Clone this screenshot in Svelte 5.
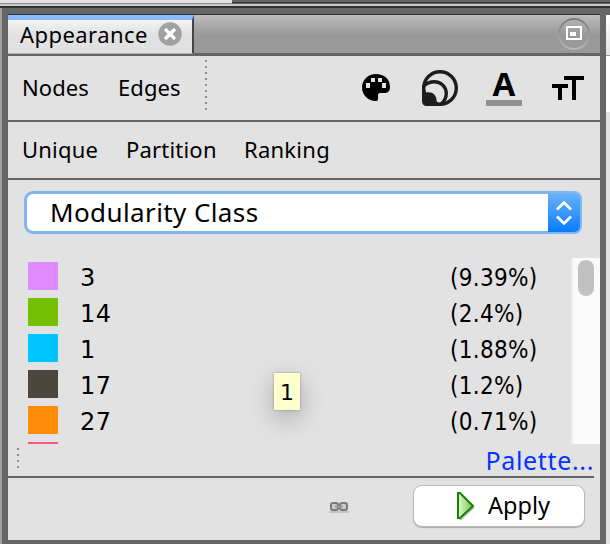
<script>
  const classes = [
    { color: '#df8aff', name: '3', share: '(9.39%)' },
    { color: '#74c000', name: '14', share: '(2.4%)' },
    { color: '#00c4ff', name: '1', share: '(1.88%)' },
    { color: '#4c463e', name: '17', share: '(1.2%)' },
    { color: '#ff8b07', name: '27', share: '(0.71%)' },
    { color: '#ff5584', name: '', share: '' },
  ];
</script>

<main>
  <div class="top"><i></i></div>
  <div class="body">
    <section class="panel">
      <header class="tabs">
        <div class="tab">
          <span class="title">Appearance</span>
          <svg width="24" height="24" viewBox="0 0 24 24"><circle cx="12" cy="12" r="11.7" fill="#a0a0a0" /><path d="M7 7l10 10M17 7l-10 10" stroke="#fff" stroke-width="3.200" /></svg>
        </div>
        <svg class="max" width="32" height="32" viewBox="0 0 32 32">
          <defs><linearGradient id="ring" x2="0" y2="1"><stop offset="0" stop-color="#7c7c7c" /><stop offset=".5" stop-color="#999" /><stop offset="1" stop-color="#b7b7b7" /></linearGradient></defs>
          <circle cx="16" cy="16" r="15" fill="none" stroke="url(#ring)" stroke-width="2" />
          <path d="M9 9h14v12H9z" fill="none" stroke="#fff" stroke-width="2" /><path d="M12 14h6v4h-6z" fill="#fff" />
        </svg>
      </header>
      <nav class="elements">
        <span class="nodes">Nodes</span><span class="edges">Edges</span><i class="dots"></i>
        <div class="tools">
          <svg width="28" height="28" viewBox="0 0 28 28"><path fill-rule="evenodd" d="M14 0C6 0 0 6 0 13.500S6 27 14 27c2 0 2-1 2-3v-3c0-1 .5-2 2-2h4c4 0 6-2 6-6C28 5 22 0 14 0M9 4h4v4H9zM16 4h4v4h-4zM4 9h4v5H4zM20 9h4v5h-4z" /></svg>
          <svg width="36" height="36" viewBox="0 0 36 36"><g fill="none" stroke="#1d1d1b" stroke-width="3.400"><circle cx="18" cy="18" r="16.300" /><path d="M2 16C5 12.500 9 11.700 12.500 11.700A11.800 11.800 0 0 1 24.300 23.500C24.300 28 22 32 18 35" /></g><path d="M0 15C1 15 3 20 4 22.500C10 21 14.500 25 14.500 30C14.500 32 16 33 19 34V36H5Q0 36 0 31Z" fill="#1d1d1b" /></svg>
          <div class="color"><b>A</b></div>
          <svg class="size" width="32" height="24" viewBox="0 0 32 24"><path d="M12 0h20v4h-8v20h-4V4h-8zM0 8h16v4h-6v12H6V12H0z" /></svg>
        </div>
      </nav>
      <nav class="modes"><span class="unique">Unique</span><span class="partition">Partition</span><span class="ranking">Ranking</span></nav>
      <div class="content">
        <div class="select"><span>Modularity Class</span>
          <div class="arrows"><svg width="16" height="24" viewBox="0 0 16 24" fill="none" stroke="#fff" stroke-width="2.600"><path d="M1 8.500l7-7 7 7M1 15.500l7 7 7-7" /></svg></div>
        </div>
        <div class="list">
          <div class="rows">
            {#each classes as item}
              <div class="row"><i style:background={item.color}></i><span class="name">{item.name}</span><span class="share">{item.share}</span></div>
            {/each}
          </div>
          <div class="scroll"><i></i></div>
          <div class="tip">1</div>
        </div>
        <div class="links"><i class="dots small"></i><span>Palette...</span></div>
      </div>
      <footer>
        <svg class="chain" width="20" height="12" viewBox="0 0 20 12" fill="none"><path d="M0 11h20" stroke="#c4c4c4" stroke-width="2" /><g stroke="#7b7b7b" stroke-width="2"><rect x="2" y="2" width="7" height="7" rx="2" fill="#ccc" /><rect x="11" y="2" width="7" height="7" rx="2" fill="#ccc" /></g><path d="M6 5.500h8" stroke="#999" stroke-width="2" /></svg>
        <button><svg width="18" height="28" viewBox="0 0 18 28"><defs><linearGradient id="play"><stop offset="0" stop-color="#e3f7ce" /><stop offset="1" stop-color="#72c657" /></linearGradient></defs><path d="M3 28l14-13" stroke="#bbb" stroke-width="2" /><path d="M1 1h2l13 13L3 26H1z" fill="url(#play)" stroke="#168000" stroke-width="2" /></svg><span>Apply</span></button>
      </footer>
    </section>
    <aside></aside>
  </div>
</main>

<style>
  :global(body) { margin: 0; }
  main { width: 610px; height: 544px; overflow: hidden; display: flex; flex-direction: column; background: #666; font-family: "Noto Sans", "Open Sans", sans-serif; font-size: 22px; color: #000; }
  main, main * { box-sizing: border-box; }
  span { white-space: nowrap; line-height: 1; }
  svg { display: block; flex: none; }
  .top { flex: none; height: 8px; background: linear-gradient(#e1e1e1 0 3px, #8d8d8d 3px 4px, #c9cdc9 4px 6px, #303330 6px 8px); display: flex; justify-content: flex-end; }
  .top i { width: 378px; height: 4px; background: linear-gradient(#666 0 2px, #333 2px 3px, #666 3px); }
  .body { flex: 1; display: flex; border-left: 2px solid #a0a0a0; }
  .panel { width: 604px; padding: 6px 6px 4px; background: #666; display: flex; flex-direction: column; }
  aside { flex: 1; margin-top: 7px; background: linear-gradient(#fff, #e2e2e2 40px, #999 40px 41px, #fff 41px 97px, #e2e2e2 97px); }
  .tabs { height: 42px; flex: none; border-top: 1px solid #333; border-bottom: 3px solid #666; background: linear-gradient(#bcbcbc, #999 20px); display: flex; justify-content: space-between; }
  .tab { width: 186px; height: 39px; border-top: 5px solid #8abaff; border-right: 2px solid #444; border-bottom: 1px solid #b0b0b0; background: linear-gradient(#f3f3f3, #e1e1e1 15px); display: flex; align-items: center; padding-left: 12px; }
  .title { width: 138px; margin-top: -5px; letter-spacing: .45px; }
  .tab svg { margin-top: -5px; }
  .max { margin: 3px 10px 0 0; }
  .elements { height: 64px; flex: none; background: #e2e2e2; display: flex; align-items: center; padding-left: 14px; }
  .elements span { margin-top: -2px; }
  .nodes { width: 96px; letter-spacing: .1px; } .edges { width: 87px; letter-spacing: .1px; }
  .dots { width: 2px; height: 50px; background: repeating-linear-gradient(#888 0 2px, transparent 2px 6px); }
  .elements .dots { margin-top: -6px; background-position: 0 0; }
  .tools { margin-left: 155px; display: flex; align-items: center; }
  .tools > :nth-child(2) { margin-left: 32px; }
  .color { width: 36px; height: 36px; margin-left: 28px; border-bottom: 6px solid #919191; text-align: center; }
  .color b { display: block; font: 700 33px/28px "Open Sans", sans-serif; }
  .size { margin-left: 30px; }
  .modes { height: 58px; margin-top: 2px; flex: none; background: #e2e2e2; border-bottom: 2px solid #666; display: flex; align-items: center; padding: 0 0 2px 14px; letter-spacing: .2px; }
  .unique { width: 104px; } .partition { width: 118px; } .ranking { letter-spacing: .25px; }
  .content { height: 296px; flex: none; background: #e2e2e2; padding-top: 11px; }
  .select { width: 558px; height: 43px; margin-left: 16px; border: 3px solid #80b4ed; border-radius: 9px; background: #fff; display: flex; align-items: center; justify-content: space-between; padding-left: 23px; font-size: 26px; letter-spacing: .4px; }
  .select span { margin-top: -2px; }
  .arrows { width: 34px; height: 43px; flex: none; margin-right: -3px; border-radius: 0 8px 8px 0; border: 2px solid #80b8f4; border-left: 0; background: linear-gradient(#6cb3fa, #087dff); display: flex; align-items: center; justify-content: center; }
  .list { position: relative; height: 186px; margin-top: 24px; display: flex; }
  .rows { width: 563px; padding-top: 4px; overflow: hidden; }
  .row { height: 36px; display: flex; align-items: flex-start; padding-left: 20px; font-size: 24px; }
  .row i { width: 30px; height: 28px; }
  .name { width: 392px; padding: 4px 0 0 22px; font-family: "DejaVu Sans", sans-serif; letter-spacing: .5px; }
  .share { padding-top: 4px; font-family: "DejaVu Sans Condensed", "DejaVu Sans", sans-serif; font-stretch: condensed; letter-spacing: .3px; }
  .scroll { width: 29px; background: #fafafa; border-left: 2px solid #eee; padding: 2px 0 0 5px; }
  .scroll i { display: block; width: 16px; height: 36px; border-radius: 8px; background: #c1c1c1; }
  .tip { position: absolute; left: 266px; top: 115px; width: 26px; height: 37px; background: #ffffcd; box-shadow: 0 0 2px #888, 0 8px 24px #0004; font: 22px/39px "DejaVu Sans", sans-serif; text-align: center; }
  .links { height: 32px; display: flex; justify-content: space-between; padding: 4px 6px 0 9px; color: #0433ff; font-size: 25px; letter-spacing: .65px; }
  .small { height: 20px; }
  footer { height: 64px; flex: none; background: linear-gradient(to right, #666 586px, #e2e2e2 586px) 0 0 / 100% 2px no-repeat, #e2e2e2; display: flex; align-items: center; padding: 0 0 4px 321px; }
  button { width: 172px; height: 42px; margin-left: 64px; border: 1px solid #bbb; border-radius: 9px; background: #fff; box-shadow: 0 1px 1px #aaa; display: flex; align-items: center; padding: 0 0 0 43px; font: 23.500px "Noto Sans", sans-serif; color: #000; }
  button span { margin-left: 13px; }
  .chain { margin-top: 2px; }
</style>
